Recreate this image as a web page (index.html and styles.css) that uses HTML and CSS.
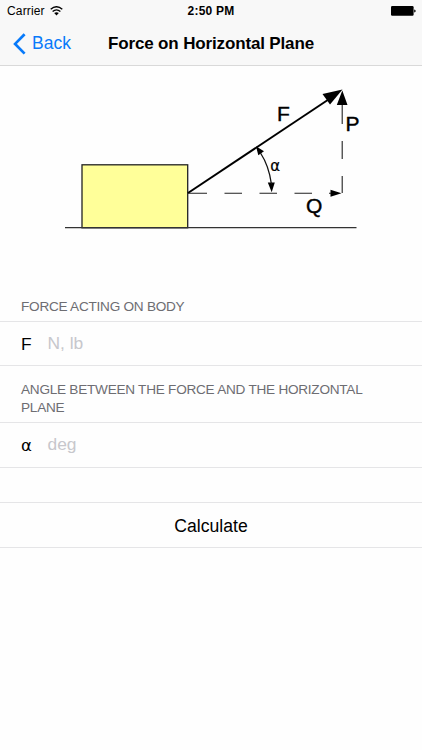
FILE: index.html
```html
<!DOCTYPE html>
<html lang="en">
<head>
<meta charset="utf-8">
<title>Force on Horizontal Plane</title>
<link rel="stylesheet" href="styles.css">
</head>
<body>
<header class="header">
  <div class="status">
    <div class="carrier"><span>Carrier</span>
      <svg class="wifi" width="13" height="10" viewBox="0 0 13 10" fill="none" stroke="#000" stroke-width="1.35">
        <path d="M.7 3.3Q6.5-1.9 12.3 3.3M2.6 5.6Q6.5 2.1 10.4 5.6"/><path d="M4.2 7.1Q6.5 5.2 8.8 7.1L6.5 9.5Z" fill="#000" stroke="none"/>
      </svg>
    </div>
    <time class="time">2:50 PM</time>
    <svg class="battery" width="25" height="10" viewBox="0 0 25 10"><rect width="22.6" height="9.7" rx="1.2"/><path d="M23.2 3.4Q24.7 3.6 24.7 4.9T23.2 6.4Z"/></svg>
  </div>
  <nav class="nav">
    <a class="back"><svg width="13" height="22" viewBox="0 0 13 22" fill="none" stroke="#087afa" stroke-width="2.7"><path d="M11.6 1.2L2.1 10.9L11.6 20.6"/></svg><span>Back</span></a>
    <h1 class="title">Force on Horizontal Plane</h1>
  </nav>
</header>
<main>
  <svg class="diagram" width="422" height="220" viewBox="0 66 422 220">
    <rect x="82" y="164.8" width="105.7" height="63" fill="#ffff99" stroke="#222" stroke-width="1.3"/>
    <path d="M65 227.6H356.5" stroke="#333" stroke-width="1.3"/>
    <path d="M188 193L330 98.5" stroke="#000" stroke-width="2"/>
    <path d="M342.5 89.5L322.5 94L330 104.5Z"/>
    <path d="M188 193.2H207M224.5 193.2H242M259.5 193.2H277M294.5 193.2H312M329 193.2H334M342.2 193V176M342.2 159V141M342.2 124V104" stroke="#222" stroke-width="1.1"/>
    <path d="M342.3 90.5L336.8 105H347.5ZM341.5 193.2L330.5 189.7V196.7ZM256 146.3L258.3 155.2L264 151.3ZM271.7 192.3L267.8 182.5H274.8Z"/>
    <path d="M260.5 153Q269 166 271.4 184" fill="none" stroke="#111" stroke-width="1.3"/>
    <g class="labels"><text x="277" y="120.7">F</text><text x="345.5" y="131">P</text><text x="306" y="212.5">Q</text><text class="alpha" x="270.2" y="170.8">α</text></g>
  </svg>
  <h2 class="heading first">FORCE ACTING ON BODY</h2>
  <label class="row"><span class="symbol">F</span><span class="placeholder force">N, lb</span></label>
  <h2 class="heading second">ANGLE BETWEEN THE FORCE AND THE HORIZONTAL<br>PLANE</h2>
  <label class="row angle"><span class="symbol greek">α</span><span class="placeholder">deg</span></label>
  <button class="calculate">Calculate</button>
</main>
</body>
</html>
```
FILE: styles.css
```css
* { box-sizing: border-box; }
body { margin: 0; background: #fefefe; color: #000; font-family: "Liberation Sans", sans-serif; }
.header { height: 66px; background: #f8f8f8; border-bottom: 1px solid #d9d9d9; }
.status { height: 22px; display: grid; grid-template-columns: 1fr auto 1fr; align-items: center; padding: 0 6px 0 7px; font-size: 12px; line-height: 22px; }
.carrier { display: flex; align-items: center; gap: 5px; }
.carrier span { letter-spacing: .15px; }
.time { margin-left: -1px; font-weight: 700; font-size: 12px; letter-spacing: .2px; }
.battery { justify-self: end; }
.nav { height: 43px; display: grid; grid-template-columns: 108px 1fr 108px; align-items: center; }
.back { display: flex; align-items: center; gap: 6px; padding-left: 13px; color: #087afa; font-size: 17.5px; }
.title { margin: 0; font-size: 17px; line-height: 22px; font-weight: 700; letter-spacing: -.15px; white-space: nowrap; }
.diagram { display: block; }
.labels { font-size: 21px; stroke: #000; stroke-width: .4px; }
.labels .alpha { font: 15px "DejaVu Sans", sans-serif; stroke-width: .2px; }
.heading { margin: 0; padding-left: 21px; color: #6d6d72; font-size: 13.6px; line-height: 18px; font-weight: 400; letter-spacing: -.25px; white-space: nowrap; }
.first { height: 35px; padding-top: 12px; }
.second { height: 56px; padding-top: 15px; }
.row { height: 45px; display: flex; align-items: center; padding-left: 21px; border: solid #e5e5e7; border-width: 1px 0; font-size: 17.4px; }
.symbol { width: 26.5px; padding-top: 2px; }
.symbol.greek { padding-top: 0; font: 16.5px "DejaVu Sans", sans-serif; }
.placeholder { color: #c7c7cc; }
.angle { height: 46px; }
.angle .placeholder { margin-top: -1px; }
.calculate { display: block; width: 100%; height: 46px; margin-top: 34px; padding: 2px 0 0; background: transparent; border: solid #e5e5e7; border-width: 1px 0; color: #000; font: 17.6px "Liberation Sans", sans-serif; }
```
